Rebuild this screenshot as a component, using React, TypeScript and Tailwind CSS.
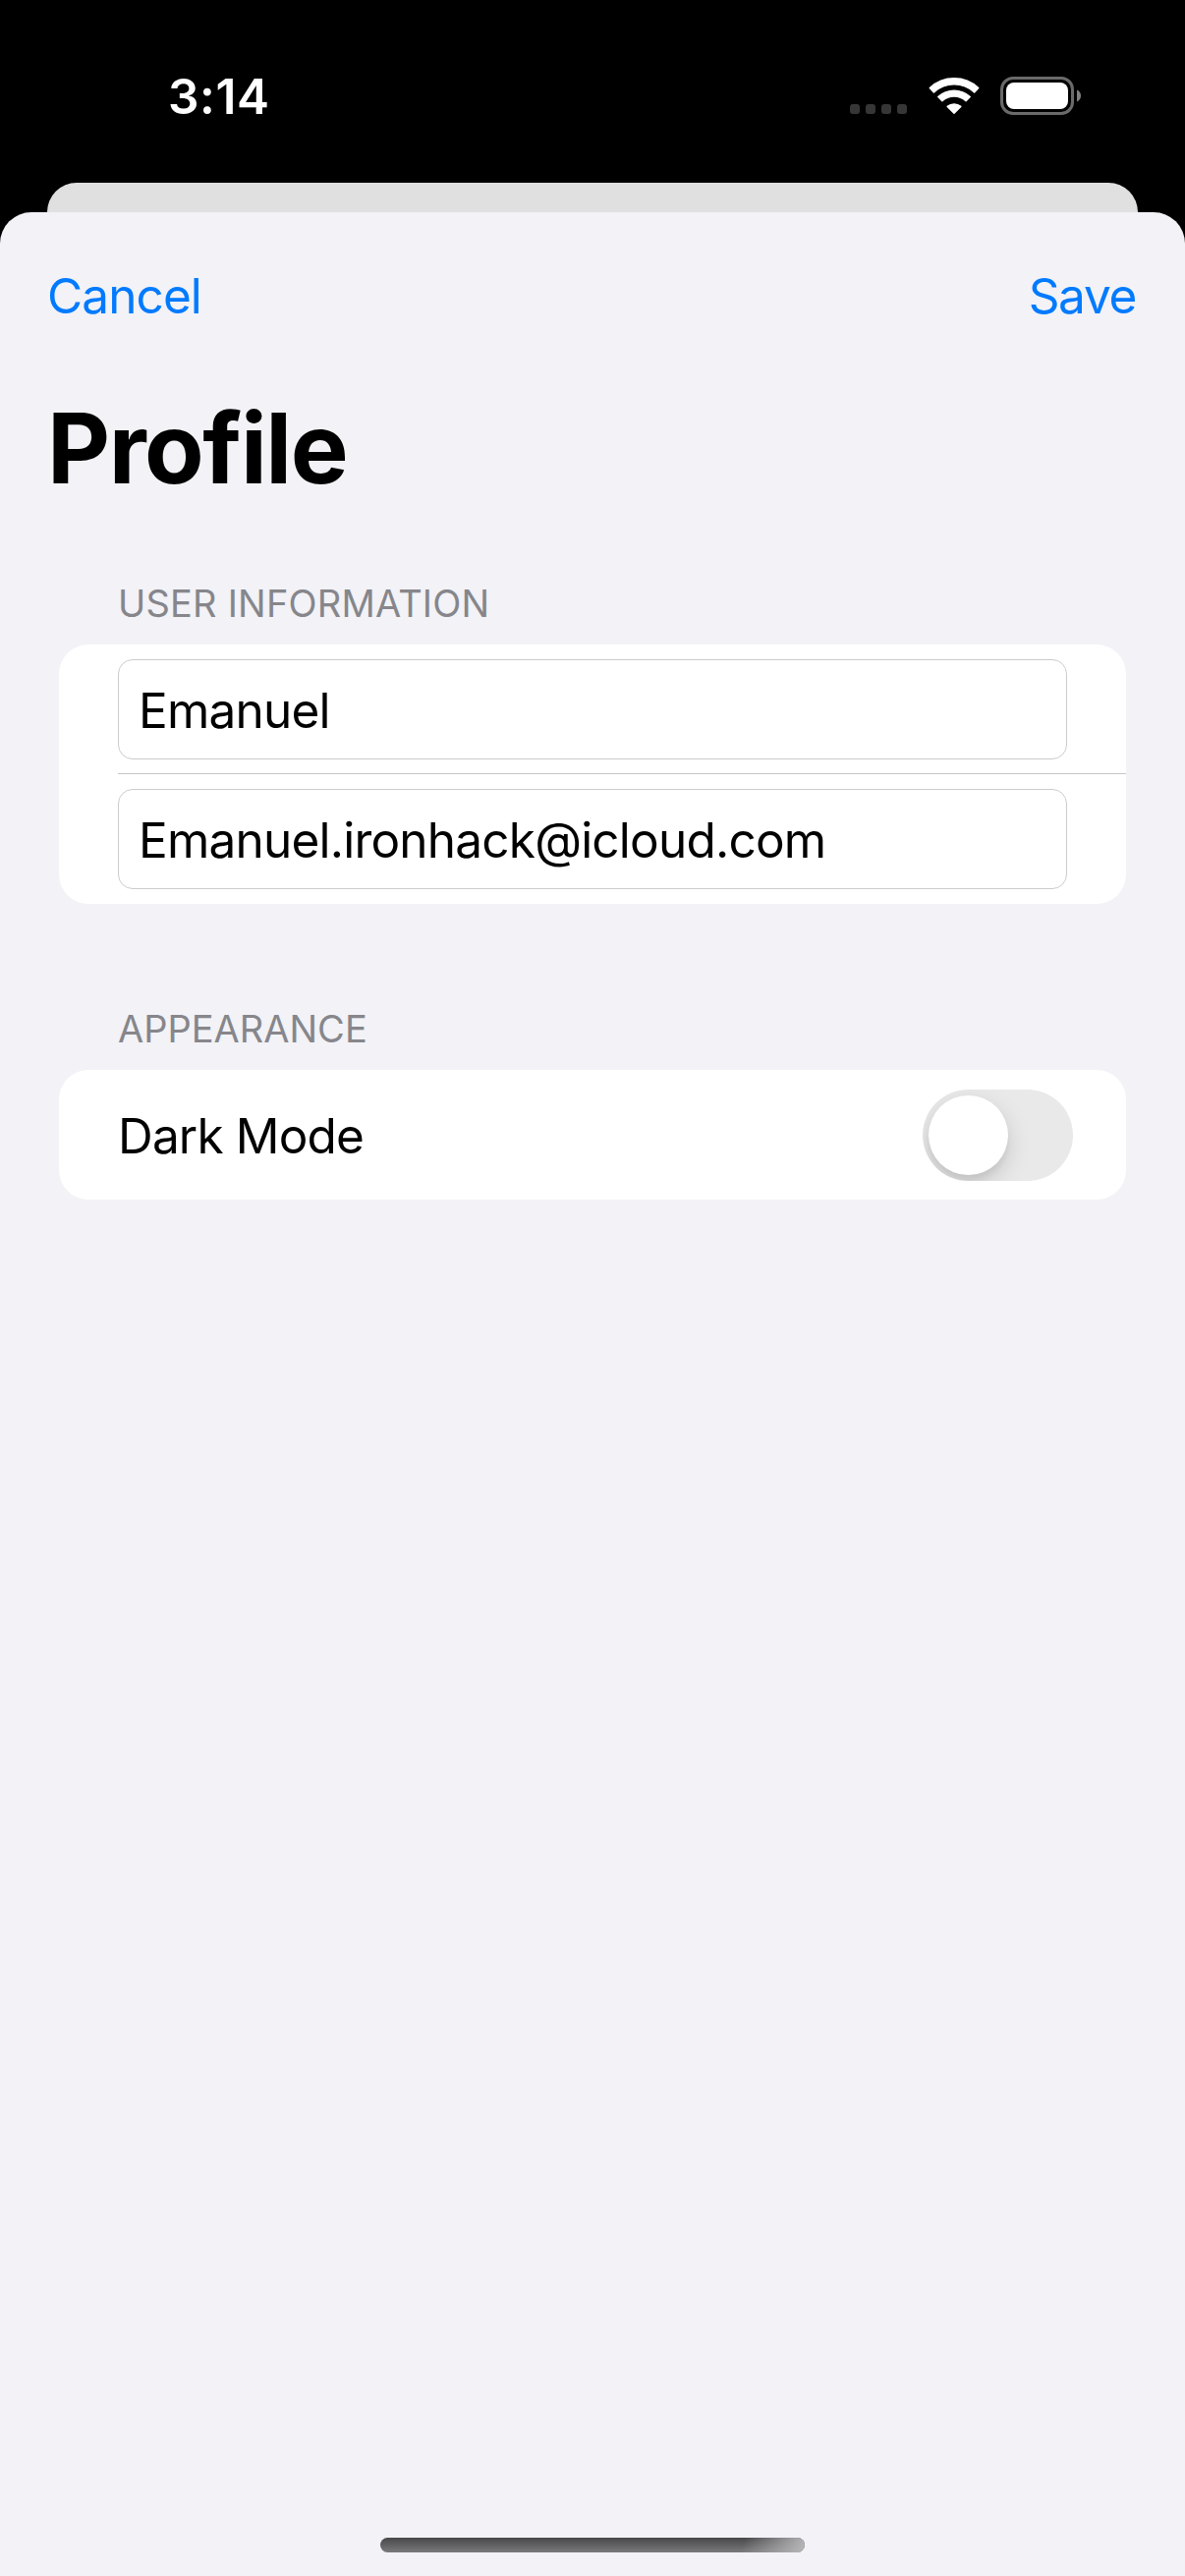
import { useState } from "react";

function WifiIcon() {
  return (
    <svg width="52" height="38" viewBox="-26 -37 52 38" className="mt-[79px] ml-[21.5px] shrink-0">
      <g fill="white" stroke="white" strokeWidth="1.5" strokeLinejoin="round">
        <path d="M-24.7-26.5A36.25 36.25 0 0 1 24.7-26.5L20.6-22.1A30.2 30.2 0 0 0-20.6-22.1Z" />
        <path d="M-16.2-17.4A23.75 23.75 0 0 1 16.2-17.4L12.1-13.2A17.9 17.9 0 0 0-12.1-13.2Z" />
        <path d="M-6.8-7.6A10.9 10.9 0 0 1 6.8-7.6L0-.9Z" />
      </g>
    </svg>
  );
}

function BatteryIcon() {
  return (
    <svg width="82" height="39" viewBox="0 0 82 39" className="mt-[78px] ml-[21.5px] shrink-0">
      <rect x="1.5" y="1.5" width="72" height="36" rx="11.5" fill="none" stroke="#6a6a6a" strokeWidth="3" />
      <rect x="6" y="6" width="63" height="27" rx="8" fill="white" />
      <path d="M78 13.5c2.6 1 4 3.4 4 6s-1.400 5-4 6z" fill="#808080" />
    </svg>
  );
}

function StatusBar() {
  return (
    <header className="flex h-[186px] items-start pl-[171px] text-white">
      <span className="mt-[68px] w-[694px] text-[49.5px] leading-[60px] font-semibold tracking-[0.6px]">3:14</span>
      <div className="mt-[106px] flex gap-[6px]">
        <i className="size-[10px] rounded-[3px] bg-[#363636]" />
        <i className="size-[10px] rounded-[3px] bg-[#363636]" />
        <i className="size-[10px] rounded-[3px] bg-[#363636]" />
        <i className="size-[10px] rounded-[3px] bg-[#363636]" />
      </div>
      <WifiIcon />
      <BatteryIcon />
    </header>
  );
}

function SectionTitle({ children }: { children: string }) {
  return <h2 className="text-[38px] leading-[46px] font-normal text-[#86868b]">{children}</h2>;
}

function Field({ label, initial }: { label: string; initial: string }) {
  const [value, setValue] = useState(initial);
  return (
    <input
      aria-label={label}
      value={value}
      onChange={(e) => setValue(e.target.value)}
      className="block h-[102px] w-[966px] rounded-[15px] border border-[#cccccc] bg-white px-5 pt-[2px] text-[49.5px] leading-[60px] tracking-[-0.79px] text-black outline-none"
    />
  );
}

function Toggle() {
  const [on, setOn] = useState(false);
  return (
    <button
      role="switch"
      aria-checked={on}
      aria-label="Dark Mode"
      onClick={() => setOn(!on)}
      className={`mt-[1px] flex h-[93px] w-[153px] items-center overflow-hidden rounded-full px-[6px] ${on ? "justify-end bg-[#34c759]" : "justify-start bg-[#e9e9ea]"}`}
    >
      <span className="size-[81px] rounded-full bg-white shadow-[0_9px_24px_rgba(0,0,0,0.15),0_6px_6px_rgba(0,0,0,0.05)]" />
    </button>
  );
}

export default function App() {
  return (
    <div className="flex h-[2622px] w-[1206px] flex-col overflow-hidden bg-black font-['Inter',sans-serif]">
      <StatusBar />
      <div className="mx-[48px] h-[30px] shrink-0 rounded-t-[30px] bg-[#e0e0e0]" />
      <main className="flex flex-1 flex-col rounded-t-[32px] bg-[#f2f2f7]">
        <nav className="flex justify-between pt-[55px] pr-[50px] pl-[48px] text-[49.5px] leading-[60px] text-[#007aff]">
          <button className="tracking-[-0.9px]">Cancel</button>
          <button className="tracking-[-1.3px]">Save</button>
        </nav>
        <h1 className="mt-[65px] pl-[48px] text-[99px] leading-[120px] font-bold tracking-[-1.5px] text-black">Profile</h1>

        <section className="mt-[75px] px-[60px]">
          <div className="pl-[60px] tracking-[0.2px]">
            <SectionTitle>USER INFORMATION</SectionTitle>
          </div>
          <div className="mt-[19px] rounded-[30px] bg-white py-[15px] pl-[60px]">
            <Field label="Name" initial="Emanuel" />
            <div className="mt-[14px] mb-[15px] h-px bg-[#c6c6c8]" />
            <Field label="Email" initial="Emanuel.ironhack@icloud.com" />
          </div>
        </section>

        <section className="mt-[104px] px-[60px]">
          <div className="pl-[60px]">
            <SectionTitle>APPEARANCE</SectionTitle>
          </div>
          <div className="mt-[19px] flex h-[132px] items-center justify-between rounded-[30px] bg-white pr-[54px] pl-[60px]">
            <span className="pt-[2px] text-[49.5px] leading-[60px] tracking-[-0.84px] text-black">Dark Mode</span>
            <Toggle />
          </div>
        </section>

        <div className="mx-auto mt-auto mb-[24px] h-[15px] w-[432px] overflow-hidden rounded-full bg-linear-to-b from-[#48484a] to-[#7a7a7c]">
          <div className="ml-auto h-full w-[72px] bg-[linear-gradient(110deg,transparent_15%,#b4b4b6_95%)]" />
        </div>
      </main>
    </div>
  );
}
